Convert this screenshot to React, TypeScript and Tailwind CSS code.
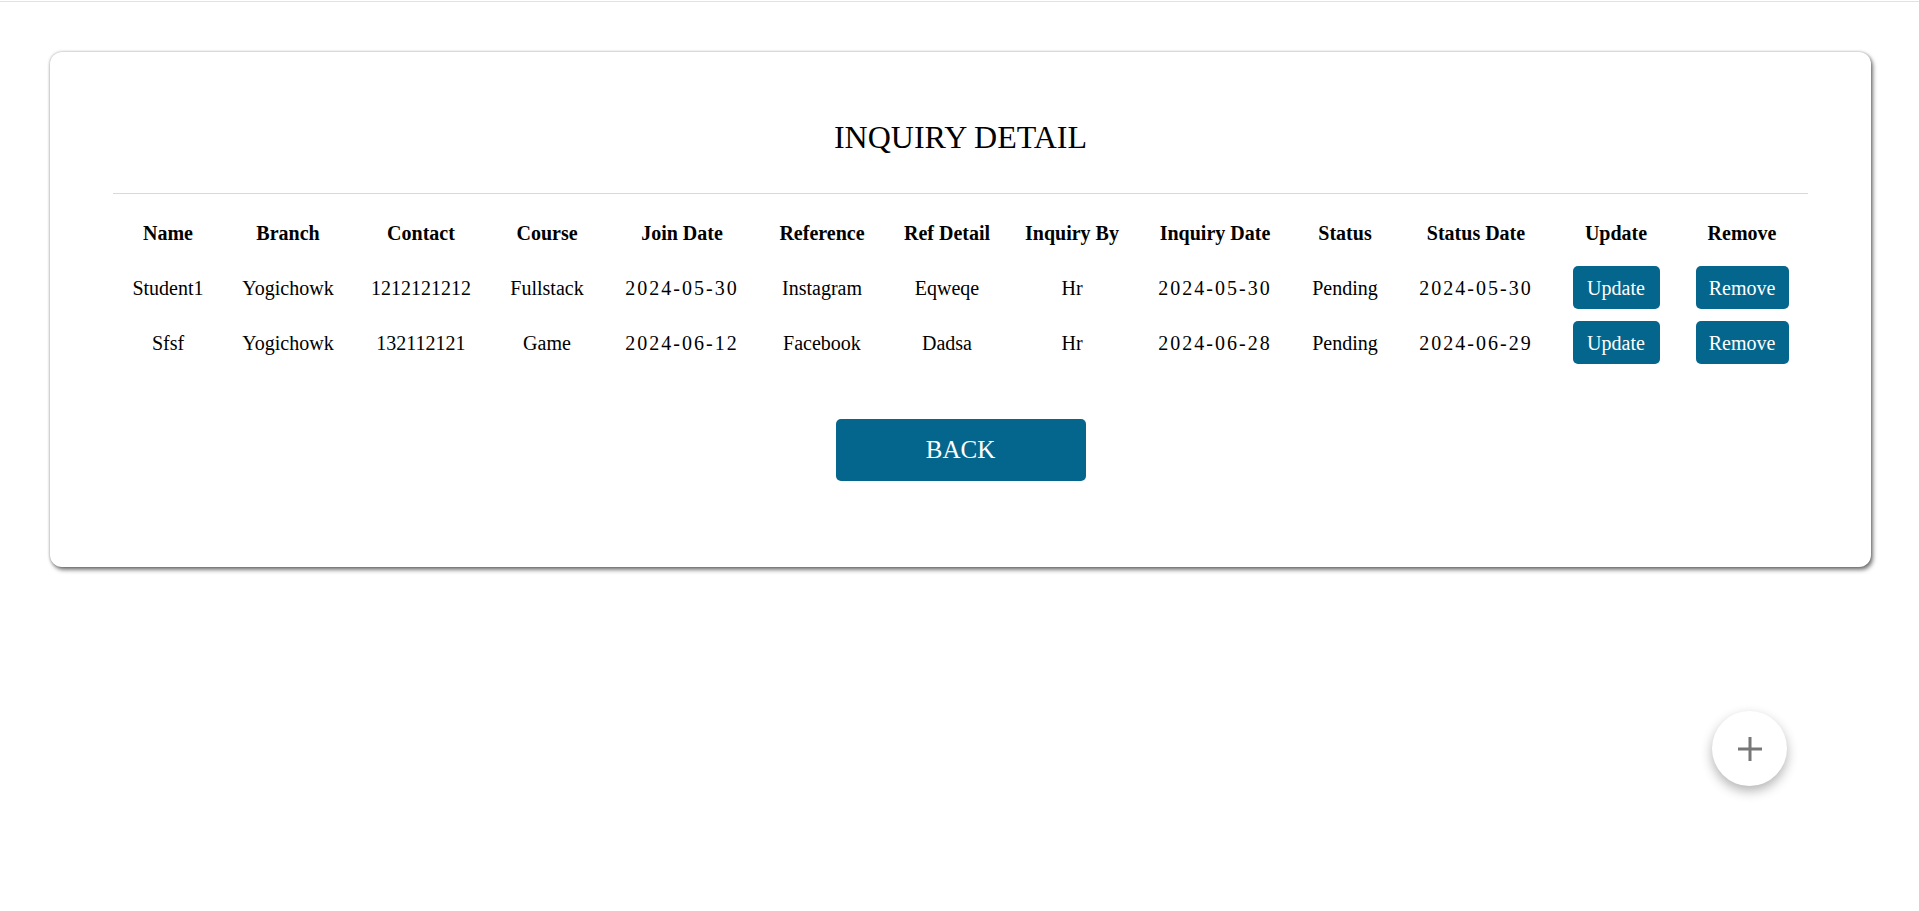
import React from "react";

const rows = [
  {
    name: "Student1",
    branch: "Yogichowk",
    contact: "1212121212",
    course: "Fullstack",
    join: "2024-05-30",
    reference: "Instagram",
    refDetail: "Eqweqe",
    by: "Hr",
    inqDate: "2024-05-30",
    status: "Pending",
    statusDate: "2024-05-30",
  },
  {
    name: "Sfsf",
    branch: "Yogichowk",
    contact: "132112121",
    course: "Game",
    join: "2024-06-12",
    reference: "Facebook",
    refDetail: "Dadsa",
    by: "Hr",
    inqDate: "2024-06-28",
    status: "Pending",
    statusDate: "2024-06-29",
  },
];

const headers: { label: string; w: string }[] = [
  { label: "Name", w: "w-[110px]" },
  { label: "Branch", w: "w-[130px]" },
  { label: "Contact", w: "w-[136px]" },
  { label: "Course", w: "w-[116px]" },
  { label: "Join Date", w: "w-[154px]" },
  { label: "Reference", w: "w-[126px]" },
  { label: "Ref Detail", w: "w-[124px]" },
  { label: "Inquiry By", w: "w-[126px]" },
  { label: "Inquiry Date", w: "w-[160px]" },
  { label: "Status", w: "w-[100px]" },
  { label: "Status Date", w: "w-[162px]" },
  { label: "Update", w: "w-[118px]" },
  { label: "Remove", w: "w-[134px]" },
];

export default function App() {
  return (
    <div
      className="min-h-[911px] bg-white text-black"
      style={{ fontFamily: '"Liberation Serif", "DejaVu Serif", serif' }}
    >
      <div className="h-px" />
      <div className="h-px bg-[#e2e2e2]" />
      <div className="ml-[50px] mr-[48px] mt-[50px] rounded-[12px] bg-white px-[63px] pt-[65px] pb-[86px] shadow-[0_0_3px_rgba(0,0,0,0.35),2px_3px_4px_rgba(0,0,0,0.5)]">
        <h2 className="text-center text-[32px] font-normal leading-[40px]">
          INQUIRY DETAIL
        </h2>
        <div className="mt-[36px] h-px bg-[#d9d9d9]" />
        <table className="mt-[11px] w-full table-fixed border-collapse text-[20px]">
          <thead>
            <tr className="h-[55px]">
              {headers.map((h) => (
                <th key={h.label} className={`${h.w} text-center font-bold whitespace-nowrap`}>
                  {h.label}
                </th>
              ))}
            </tr>
          </thead>
          <tbody>
            {rows.map((r) => (
              <tr key={r.name} className="h-[55px]">
                <td className="text-center whitespace-nowrap">{r.name}</td>
                <td className="text-center whitespace-nowrap">{r.branch}</td>
                <td className="text-center whitespace-nowrap">{r.contact}</td>
                <td className="text-center whitespace-nowrap">{r.course}</td>
                <td className="text-center whitespace-nowrap tracking-[2px]">{r.join}</td>
                <td className="text-center whitespace-nowrap">{r.reference}</td>
                <td className="text-center whitespace-nowrap">{r.refDetail}</td>
                <td className="text-center whitespace-nowrap">{r.by}</td>
                <td className="text-center whitespace-nowrap tracking-[2px]">{r.inqDate}</td>
                <td className="text-center whitespace-nowrap">{r.status}</td>
                <td className="text-center whitespace-nowrap tracking-[2px]">{r.statusDate}</td>
                <td className="text-center">
                  <button className="inline-flex h-[43px] w-[87px] items-center justify-center rounded-[5px] bg-[#05668D] text-[20px] text-white">
                    Update
                  </button>
                </td>
                <td className="text-center">
                  <button className="inline-flex h-[43px] w-[93px] items-center justify-center rounded-[5px] bg-[#05668D] text-[20px] text-white">
                    Remove
                  </button>
                </td>
              </tr>
            ))}
          </tbody>
        </table>
        <div className="mt-[49px] flex justify-center">
          <button className="flex h-[62px] w-[250px] items-center justify-center rounded-[5px] bg-[#05668D] text-[25px] text-white">
            BACK
          </button>
        </div>
      </div>
      <button
        aria-label="Add"
        className="fixed left-[1712px] top-[711px] flex h-[75px] w-[75px] items-center justify-center rounded-full bg-white shadow-[0_5px_12px_rgba(0,0,0,0.3)]"
      >
        <svg width="26" height="26" viewBox="0 0 26 26">
          <path d="M13 1v24M1 13h24" stroke="#777" strokeWidth="3" />
        </svg>
      </button>
    </div>
  );
}
